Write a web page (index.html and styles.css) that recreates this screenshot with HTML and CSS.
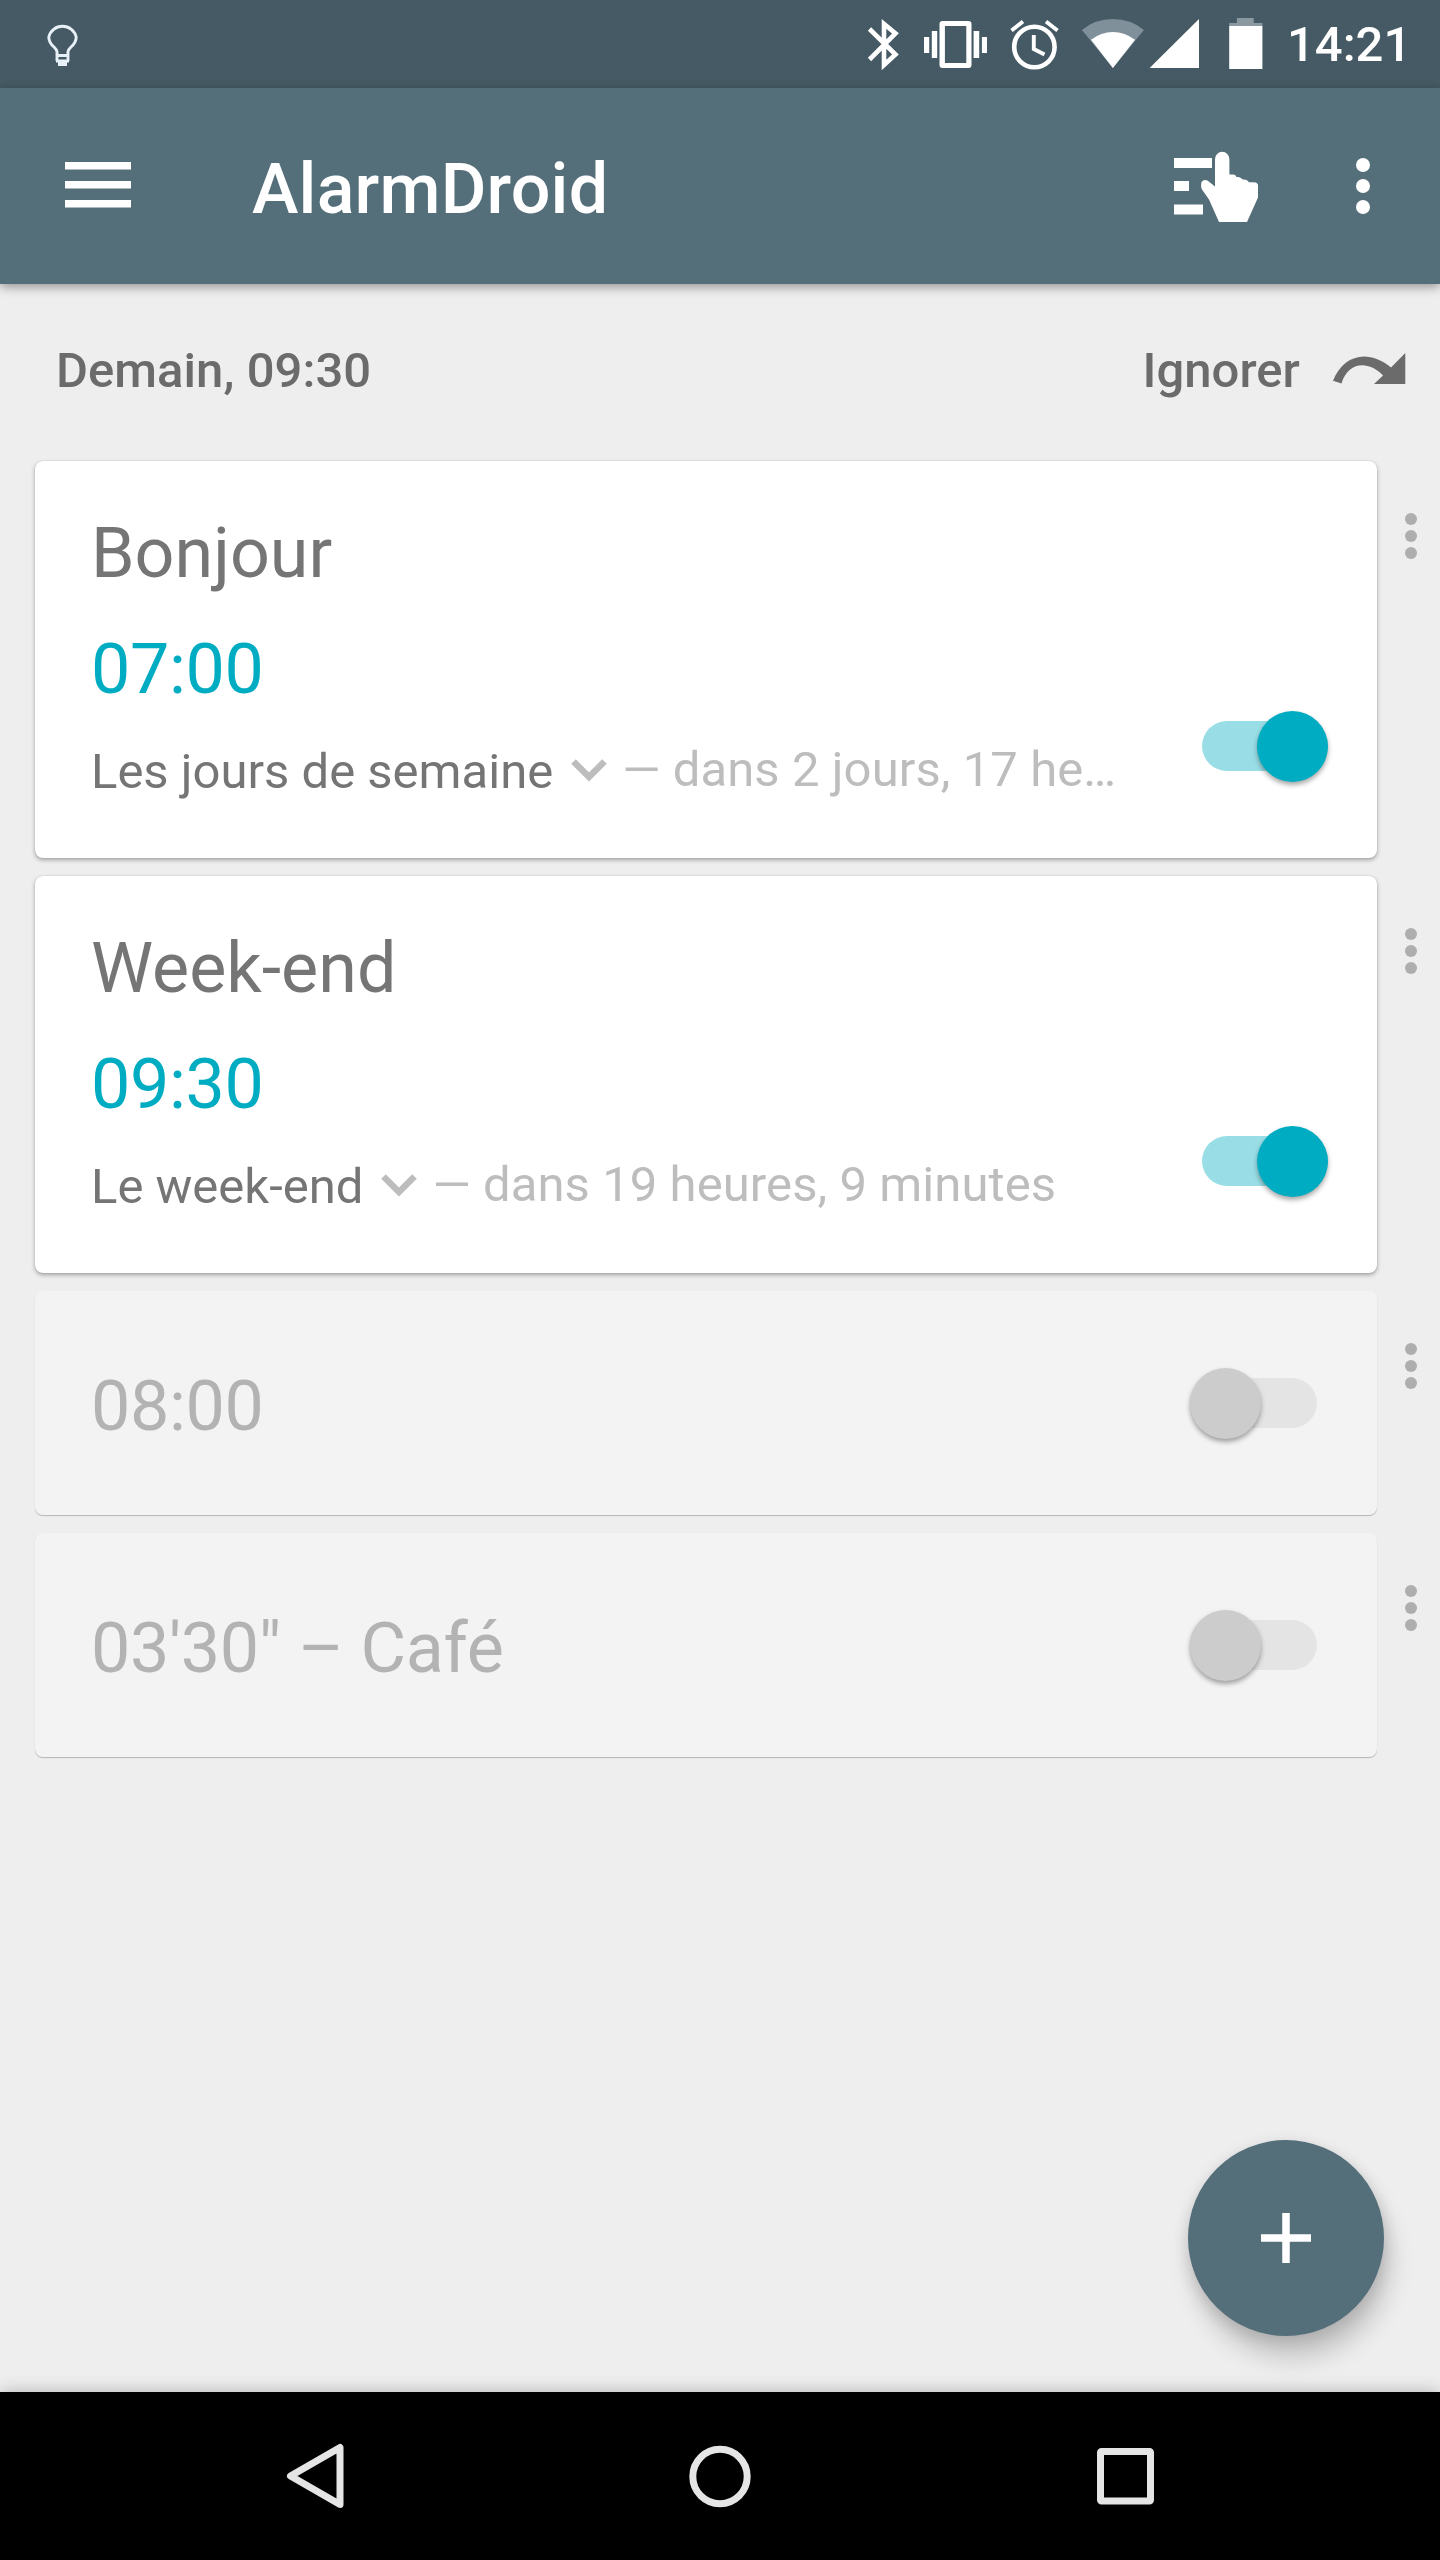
FILE: index.html
```html
<!DOCTYPE html>
<html lang="fr">
<head>
<meta charset="utf-8">
<title>AlarmDroid</title>
<link rel="stylesheet" href="styles.css">
</head>
<body>
<div class="screen">
  <div class="status-bar">
    <svg class="bulb" width="32" height="46" viewBox="0 0 32 46" fill="none" stroke="#e8f0f8" stroke-width="2.900"><path d="M10 40V30.500Q9.500 28.500 7 26Q1.800 21.500 1.800 16A14 13.500 0 0 1 29.200 16Q29.200 21.500 24 26Q21.500 28.500 21 30.500V40"/><path d="M9 34.500H22M9 40H22" stroke-width="2.800"/><path d="M11 43H20" stroke-width="4"/></svg>
    <svg class="status-icons" width="400" height="88" viewBox="866 0 400 88" fill="#fff">
      <path d="M869.500 29L895.500 54.500L884 65V24L895.500 33.500L869.500 59.500" fill="none" stroke="#fff" stroke-width="4.600"/>
      <path fill-rule="evenodd" d="M942.500 21h26a3 3 0 0 1 3 3v41a3 3 0 0 1-3 3h-26a3 3 0 0 1-3-3V24a3 3 0 0 1 3-3zm2.400 5v37h21.400V26z"/>
      <path d="M924 37h5.200v16H924zM931.800 31h5.400v27h-5.400zM973.600 31h5.600v27h-5.600zM981.900 37h5.100v16h-5.100z"/>
      <circle cx="1034.400" cy="47" r="20.200" fill="none" stroke="#fff" stroke-width="4.600"/>
      <path d="M1033.800 35V49L1044.500 54.500M1011.500 30.500L1023 21.500M1046 21.500L1057.500 30.500" fill="none" stroke="#fff" stroke-width="3.900"/>
      <path d="M1112.900 68L1081.900 30Q1095 19 1112.900 19T1143.900 30z" fill="#80909a"/>
      <path d="M1112.900 68L1091 39.800Q1101 32 1112.900 32T1135 39.800z"/>
      <path d="M1149.600 68H1199V19z"/>
      <path d="M1229.200 26V23H1236.900V18H1253.700V23H1262.400V26z" fill="#8a999f"/>
      <path d="M1229.200 26H1262.400V69H1229.200z"/>
    </svg>
    <span class="clock">14:21</span>
  </div>

  <header class="app-bar">
    <svg class="menu" width="66" height="46" viewBox="0 0 66 46" fill="#fff"><path d="M0 0h66v7.500H0zM0 19h66v7.500H0zM0 38h66v7.500H0z"/></svg>
    <h1 class="title">AlarmDroid</h1>
    <svg class="pick" width="84" height="72" viewBox="0 0 84 72" fill="#fff"><path d="M0 7h38v10H0zM0 30h15v10H0zM0 53.500h29v10H0z"/><path d="M41 8a7.200 7.200 0 0 1 14.400 0V23.500h3.500q3 0 3.500 2.500q4-.5 5 1.500l1.500 1q4-.5 5 1.500l1 1.300q5-.3 7 .2q2.300 1.200 2.300 3.500V46L73 71H45L35 48.500L28 38.500Q26.500 36 27.500 31Q29.500 28 33.500 29.500L41 35.500z"/></svg>
    <svg class="more" width="14" height="56" viewBox="0 0 14 56" fill="#fff"><circle cx="7" cy="7" r="7"/><circle cx="7" cy="28" r="7"/><circle cx="7" cy="49" r="7"/></svg>
  </header>

  <main class="content">
    <div class="next">
      <span>Demain, 09:30</span>
      <span class="skip">Ignorer</span>
      <svg class="skip-icon" width="74" height="34" viewBox="0 0 74 34" fill="#6b6b6b"><path d="M0 28.700C10 4 34-4 58 15.500L72.300 1V32H41L50 23.500C35 8 15 10 8.500 31.500z"/></svg>
    </div>

    <div class="alarms">
      <div class="alarm">
        <section class="card">
          <div class="info">
            <div class="name">Bonjour</div>
            <div class="time">07:00</div>
            <div class="repeat"><span>Les jours de semaine</span><svg class="chevron" width="36" height="24" viewBox="0 0 36 24"><path d="M2.500 2.500L18 18L33.500 2.500"/></svg><span class="remaining">— dans 2 jours, 17 he…</span></div>
          </div>
          <span class="switch on"><i class="thumb"></i></span>
        </section>
        <svg class="dots" width="12" height="46" viewBox="0 0 12 46"><circle cx="6" cy="6" r="6"/><circle cx="6" cy="23" r="6"/><circle cx="6" cy="40" r="6"/></svg>
      </div>
      <div class="alarm">
        <section class="card">
          <div class="info">
            <div class="name">Week-end</div>
            <div class="time">09:30</div>
            <div class="repeat"><span>Le week-end</span><svg class="chevron" width="36" height="24" viewBox="0 0 36 24"><path d="M2.500 2.500L18 18L33.500 2.500"/></svg><span class="remaining">— dans 19 heures, 9 minutes</span></div>
          </div>
          <span class="switch on"><i class="thumb"></i></span>
        </section>
        <svg class="dots" width="12" height="46" viewBox="0 0 12 46"><circle cx="6" cy="6" r="6"/><circle cx="6" cy="23" r="6"/><circle cx="6" cy="40" r="6"/></svg>
      </div>
      <div class="alarm">
        <section class="card off">
          <div class="name timer">08:00</div>
          <span class="switch"><i class="thumb"></i></span>
        </section>
        <svg class="dots" width="12" height="46" viewBox="0 0 12 46"><circle cx="6" cy="6" r="6"/><circle cx="6" cy="23" r="6"/><circle cx="6" cy="40" r="6"/></svg>
      </div>
      <div class="alarm">
        <section class="card off">
          <div class="name timer">03'30" – Café</div>
          <span class="switch"><i class="thumb"></i></span>
        </section>
        <svg class="dots" width="12" height="46" viewBox="0 0 12 46"><circle cx="6" cy="6" r="6"/><circle cx="6" cy="23" r="6"/><circle cx="6" cy="40" r="6"/></svg>
      </div>
    </div>

    <button class="fab" aria-label="Ajouter"><svg width="50" height="50" viewBox="0 0 50 50" stroke="#fff" stroke-width="7.500"><path d="M25 0V50M0 25H50"/></svg></button>
  </main>

  <nav class="nav-bar">
    <svg width="66" height="66" viewBox="0 0 66 66"><path d="M8.500 33L58 4.500V61.500z"/></svg>
    <svg width="66" height="66" viewBox="0 0 66 66"><circle cx="33" cy="33.500" r="27.200"/></svg>
    <svg width="66" height="66" viewBox="0 0 66 66"><rect x="8.500" y="8.500" width="50" height="49.500" rx="1"/></svg>
  </nav>
</div>
</body>
</html>
```
FILE: styles.css
```css
* { box-sizing: border-box; }

body {
  margin: 0;
  font-family: Roboto, "Noto Sans", sans-serif;
  background: #eee;
}

svg { display: block; flex: none; }

.screen {
  width: 1440px;
  height: 2560px;
  display: flex;
  flex-direction: column;
  overflow: hidden;
}

.status-bar {
  height: 88px;
  display: flex;
  align-items: center;
  padding: 0 33px 0 47px;
  background: #455a64;
  color: #fff;
}

.status-icons { margin-left: auto; }

.clock {
  width: 120px;
  margin: 2px 0 0 21px;
  font-size: 49px;
  font-weight: 500;
  line-height: 58px;
  white-space: nowrap;
}

.app-bar {
  position: relative;
  z-index: 1;
  height: 196px;
  display: flex;
  align-items: center;
  padding: 0 70px 0 65px;
  background: #546e7a;
  box-shadow: 0 3px 10px rgba(0, 0, 0, .38);
}

.menu { margin-bottom: 3px; }

.title {
  flex: 1;
  margin: 6px 0 0 121px;
  color: #fff;
  font-size: 70px;
  font-weight: 500;
  letter-spacing: .2px;
  line-height: 82px;
}

.pick { margin: 2px 98px 0 0; }

.content {
  position: relative;
  flex: 1;
}

.next {
  height: 177px;
  display: flex;
  align-items: center;
  padding: 0 33px 4px 56px;
  color: #6b6b6b;
  font-size: 49px;
  font-weight: 500;
  letter-spacing: .05px;
  line-height: 58px;
}

.skip { margin: 0 33px 0 auto; }

.skip-icon { margin-bottom: 4px; }

.alarms {
  display: flex;
  flex-direction: column;
  gap: 18px;
  padding-left: 35px;
}

.alarm {
  display: flex;
  gap: 28px;
}

.dots {
  margin-top: 52px;
  fill: #aeaeae;
}

.card {
  width: 1342px;
  height: 397px;
  display: flex;
  justify-content: space-between;
  padding: 51px 49px 0 56px;
  border-radius: 8px;
  background: #fff;
  box-shadow: 0 2px 4px rgba(0, 0, 0, .32), 0 0 1px rgba(0, 0, 0, .2);
  color: #757575;
}

.name, .time {
  font-size: 70px;
  line-height: 82px;
}

.time, .timer { letter-spacing: -.35px; }

.time {
  margin-top: 34px;
  color: #00acc1;
}

.repeat {
  display: flex;
  align-items: center;
  margin-top: 33px;
  font-size: 49px;
  line-height: 58px;
  white-space: nowrap;
}

.chevron {
  margin: 0 15px 2px 18px;
  fill: none;
  stroke: #bdbdbd;
  stroke-width: 6.5;
}

.remaining {
  margin-top: -4px;
  color: #bdbdbd;
  letter-spacing: .08px;
}

.switch {
  width: 126px;
  height: 50px;
  display: flex;
  align-items: center;
  margin-top: 209px;
  border-radius: 25px;
  background: #99dee6;
}

.on { justify-content: flex-end; }

.thumb {
  width: 71px;
  height: 71px;
  border-radius: 50%;
  background: #00acc1;
  box-shadow: 0 3px 5px rgba(0, 0, 0, .35);
}

.off {
  height: 224px;
  padding: 74px 60px 0 56px;
  background: #f3f3f3;
  box-shadow: 0 1px 1px rgba(0, 0, 0, .24);
  color: #b3b3b3;
}

.off .switch {
  width: 127px;
  margin-top: 13px;
  background: #e4e4e4;
}

.off .thumb {
  background: #ccc;
}

.fab {
  position: absolute;
  right: 56px;
  bottom: 56px;
  width: 196px;
  height: 196px;
  display: flex;
  align-items: center;
  justify-content: center;
  padding: 0;
  border: 0;
  border-radius: 50%;
  background: #546e7a;
  box-shadow: 6px 22px 24px rgba(0, 0, 0, .18), 0 4px 16px rgba(0, 0, 0, .14);
}

.nav-bar {
  position: relative;
  height: 168px;
  display: flex;
  align-items: center;
  justify-content: center;
  gap: 339px;
  background: #000;
  box-shadow: 0 0 16px rgba(0, 0, 0, .25);
}

.nav-bar svg {
  fill: none;
  stroke: #e5e5e5;
  stroke-width: 7;
  stroke-linejoin: round;
}
```
